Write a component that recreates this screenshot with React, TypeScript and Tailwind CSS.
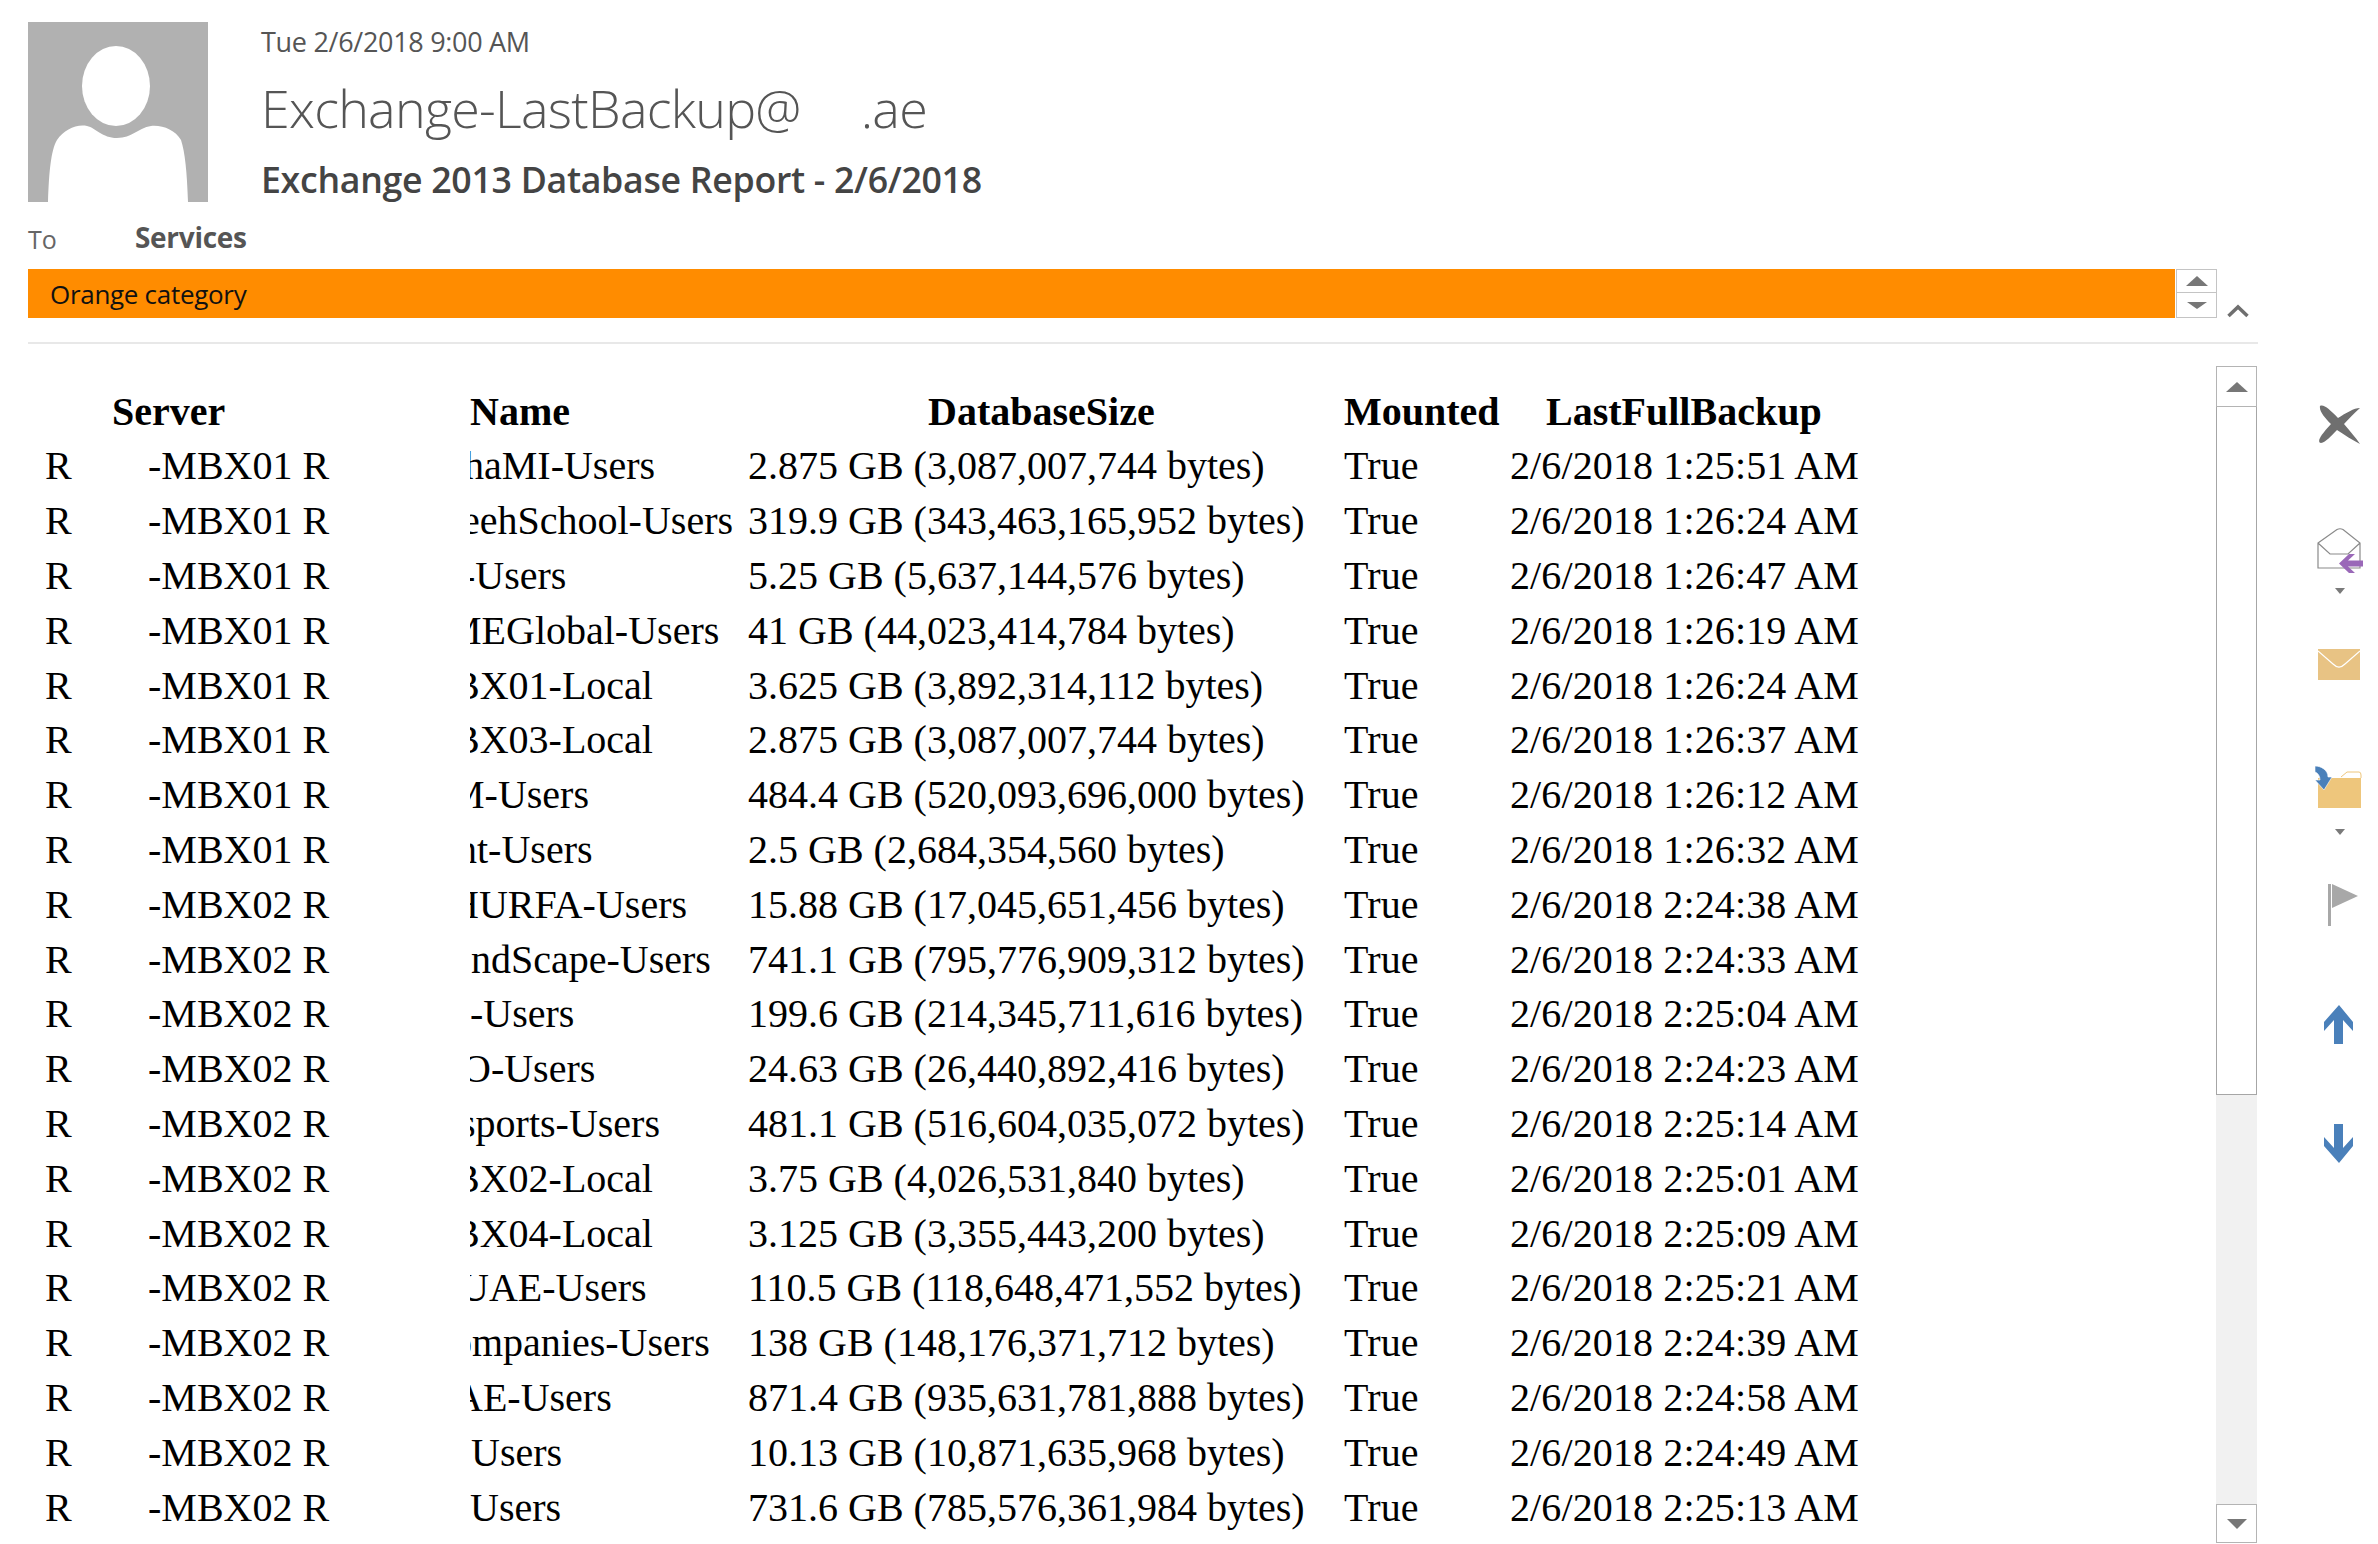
const rows: [string, string, string, string, string][] = [
  ["-MBX01 R", "haMI-Users", "ml-[-6px]", "2.875 GB (3,087,007,744 bytes)", "2/6/2018 1:25:51 AM"],
  ["-MBX01 R", "eehSchool-Users", "ml-[-8px]", "319.9 GB (343,463,165,952 bytes)", "2/6/2018 1:26:24 AM"],
  ["-MBX01 R", "-Users", "ml-[-8px]", "5.25 GB (5,637,144,576 bytes)", "2/6/2018 1:26:47 AM"],
  ["-MBX01 R", "MEGlobal-Users", "ml-[-24px]", "41 GB (44,023,414,784 bytes)", "2/6/2018 1:26:19 AM"],
  ["-MBX01 R", "BX01-Local", "ml-[-17px]", "3.625 GB (3,892,314,112 bytes)", "2/6/2018 1:26:24 AM"],
  ["-MBX01 R", "BX03-Local", "ml-[-17px]", "2.875 GB (3,087,007,744 bytes)", "2/6/2018 1:26:37 AM"],
  ["-MBX01 R", "M-Users", "ml-[-21px]", "484.4 GB (520,093,696,000 bytes)", "2/6/2018 1:26:12 AM"],
  ["-MBX01 R", "nt-Users", "ml-[-13px]", "2.5 GB (2,684,354,560 bytes)", "2/6/2018 1:26:32 AM"],
  ["-MBX02 R", "HURFA-Users", "ml-[-20px]", "15.88 GB (17,045,651,456 bytes)", "2/6/2018 2:24:38 AM"],
  ["-MBX02 R", "ndScape-Users", "ml-[1px]", "741.1 GB (795,776,909,312 bytes)", "2/6/2018 2:24:33 AM"],
  ["-MBX02 R", "-Users", "ml-0", "199.6 GB (214,345,711,616 bytes)", "2/6/2018 2:25:04 AM"],
  ["-MBX02 R", "O-Users", "ml-[-8px]", "24.63 GB (26,440,892,416 bytes)", "2/6/2018 2:24:23 AM"],
  ["-MBX02 R", "sports-Users", "ml-[-10px]", "481.1 GB (516,604,035,072 bytes)", "2/6/2018 2:25:14 AM"],
  ["-MBX02 R", "BX02-Local", "ml-[-17px]", "3.75 GB (4,026,531,840 bytes)", "2/6/2018 2:25:01 AM"],
  ["-MBX02 R", "BX04-Local", "ml-[-17px]", "3.125 GB (3,355,443,200 bytes)", "2/6/2018 2:25:09 AM"],
  ["-MBX02 R", "UAE-Users", "ml-[-10px]", "110.5 GB (118,648,471,552 bytes)", "2/6/2018 2:25:21 AM"],
  ["-MBX02 R", "ompanies-Users", "ml-[-18px]", "138 GB (148,176,371,712 bytes)", "2/6/2018 2:24:39 AM"],
  ["-MBX02 R", "AE-Users", "ml-[-16px]", "871.4 GB (935,631,781,888 bytes)", "2/6/2018 2:24:58 AM"],
  ["-MBX02 R", "Users", "ml-[1px]", "10.13 GB (10,871,635,968 bytes)", "2/6/2018 2:24:49 AM"],
  ["-MBX02 R", "Users", "ml-0", "731.6 GB (785,576,361,984 bytes)", "2/6/2018 2:25:13 AM"],
];

function Caret() {
  return (
    <svg width="10" height="6" viewBox="0 0 10 6" className="block">
      <path d="M0 0H10L5 6Z" fill="#7a7a7a" />
    </svg>
  );
}

function Tri({ up, w = 22, h = 10 }: { up?: boolean; w?: number; h?: number }) {
  return (
    <svg width={w} height={h} viewBox="0 0 22 10" preserveAspectRatio="none" className="block">
      <path d={up ? "M0 10H22L11 0Z" : "M0 0H22L11 10Z"} fill="#777777" />
    </svg>
  );
}

export default function App() {
  return (
    <div className="w-[2378px] h-[1544px] overflow-hidden bg-white flex font-['Open_Sans','Noto_Sans',sans-serif]">
      <div className="w-[2230px] ml-[28px] shrink-0 flex flex-col">
        <div className="flex h-[202px] pt-[22px]">
          <div className="w-[180px] h-[180px] bg-[#b1b1b1] shrink-0">
            <svg width="180" height="180" viewBox="0 0 180 180" className="block">
              <ellipse cx="88" cy="64" rx="34" ry="40" fill="#fff" />
              <path d="M20 180C21 150 23 128 29 118C36 108 48 102 59 104C68 106 74 116 89 116C104 116 110 106 123 104C135 103 147 108 153 118C157 130 159 150 160 180Z" fill="#fff" />
            </svg>
          </div>
          <div className="ml-[53px] flex flex-col text-[#444444]">
            <div className="text-[27px] leading-[36px] mt-[2px] font-normal tracking-[-0.3px] text-[#555555]">Tue 2/6/2018 9:00 AM</div>
            <div className="text-[52px] leading-[70px] mt-[13px] font-light tracking-[-0.72px] text-[#555555] whitespace-pre">Exchange-LastBackup@     <span className="ml-[-4px]">.ae</span></div>
            <div className="text-[35.7px] leading-[48px] mt-[12px] font-semibold tracking-[-0.3px] text-[#444444]">Exchange 2013 Database Report - 2/6/2018</div>
          </div>
        </div>
        <div className="flex h-[67px] items-start pt-[17px]">
          <div className="w-[107px] text-[25px] leading-[34px] mt-[3px] text-[#666666]">To</div>
          <div className="text-[28px] leading-[36px] font-bold tracking-[-0.3px] text-[#555555]">Services</div>
        </div>
        <div className="flex h-[49px]">
          <div className="w-[2147px] h-[49px] bg-[#ff8c00] flex items-center pl-[22px] pt-[2px] text-[26px] tracking-[-0.3px] text-[#111111]">Orange category</div>
          <div className="ml-[1px] w-[41px] h-[49px] border border-[#c4c4c4] flex flex-col">
            <div className="h-[23px] border-b border-[#c4c4c4] flex items-center justify-center"><Tri up /></div>
            <div className="flex-1 flex items-center justify-center"><Tri w={20} h={7} /></div>
          </div>
          <svg width="22" height="14" viewBox="0 0 22 14" className="block ml-[10px] mt-[35px]">
            <path d="M1.5 12L11 3L20.5 12" fill="none" stroke="#6f6f6f" strokeWidth="3.5" />
          </svg>
        </div>
        <div className="h-[2px] mt-[24px] bg-[#e8e8e8]" />
        <div className="flex-1 flex min-h-0 mt-[22px]">
          <div className="flex-1 min-w-0 pt-[19px] font-['Liberation_Serif',serif] text-[40px] text-black whitespace-nowrap">
            <div className="flex h-[54px] items-center font-bold">
              <div className="w-[442px] pl-[84px]">Server</div>
              <div className="w-[278px]">Name</div>
              <div className="w-[596px] pl-[180px]">DatabaseSize</div>
              <div className="w-[166px]">Mounted</div>
              <div className="pl-[36px]">LastFullBackup</div>
            </div>
            {rows.map((r, i) => (
              <div key={i} className="flex h-[54.8px] items-center">
                <div className="w-[120px] pl-[17px]">R</div>
                <div className="w-[322px]">{r[0]}</div>
                <div className="w-[278px] overflow-hidden"><div className={r[2]}>{r[1]}</div></div>
                <div className="w-[596px]">{r[3]}</div>
                <div className="w-[166px] tracking-[0.15px]">True</div>
                <div className="tracking-[0.12px]">{r[4]}</div>
              </div>
            ))}
          </div>
          <div className="w-[41px] mr-[1px] shrink-0 h-[1177px] bg-[#f1f1f1] flex flex-col">
            <div className="h-[41px] border border-[#b4b4b4] bg-white flex items-center justify-center"><Tri up /></div>
            <div className="h-[688px] border border-t-0 border-[#a6a6a6] bg-white" />
            <div className="flex-1" />
            <div className="h-[39px] border border-[#b4b4b4] bg-white flex items-start justify-center pt-[14px]"><Tri w={20} h={10} /></div>
          </div>
        </div>
      </div>
      <div className="flex-1 flex flex-col items-start pl-[60px]">
        <svg width="44" height="40" viewBox="0 0 44 40" className="block mt-[404px]">
          <path d="M2 2C6 0 12 6 20 14C28 9 36 4 42 4C36 9 31 15 26 20C32 27 38 34 42 40C34 36 27 31 19 26C13 32 8 38 3 39C-1 38 1 33 13 20C7 14 1 7 2 2Z" fill="#6f6f6f" />
        </svg>
        <svg width="48" height="46" viewBox="0 0 48 46" className="block mt-[84px] ml-[-1px]">
          <path d="M1 15L20 1.5C22 0.5 24 0.5 26 1.5L43 15V40H1ZM1 15L13 26H31L43 15" fill="none" stroke="#8a8a8a" strokeWidth="1.2" />
          <path d="M22 35.5L32 26H38L31 32.5H46V38.5H31L38 45H32Z" fill="#9a68b8" />
        </svg>
        <div className="ml-[17px] mt-[14px]"><Caret /></div>
        <svg width="42" height="31" viewBox="0 0 42 31" className="block mt-[55px]">
          <rect width="42" height="31" fill="#e8c384" />
          <path d="M0 2L15 15C19 19 23 19 27 15L42 2" fill="none" stroke="#fff" strokeWidth="1.2" />
        </svg>
        <svg width="48" height="44" viewBox="0 0 48 44" className="block mt-[85px] ml-[-3px]">
          <path d="M3 13H46V43H3Z" fill="#eec67c" />
          <path d="M26 12L32 7H44Q46 7 46 10V13" fill="none" stroke="#eec67c" strokeWidth="1" />
          <path d="M0 1C6 1 13 5 13 12L17 12L9 25L0 15H5C5 11 3 8 0 7Z" fill="#4a80ba" stroke="#fff" strokeWidth="0.6" />
        </svg>
        <div className="ml-[17px] mt-[20px]"><Caret /></div>
        <svg width="30" height="42" viewBox="0 0 30 42" className="block mt-[49px] ml-[10px]">
          <rect width="3" height="42" fill="#a8a8a8" />
          <path d="M4 0L30 12L4 24Z" fill="#a8a8a8" />
        </svg>
        <svg width="30" height="39" viewBox="0 0 30 39" className="block mt-[79px] ml-[6px]">
          <path d="M15 0L29 17V26L19 15V39H10V15L0 26V17Z" fill="#4a80ba" />
        </svg>
        <svg width="30" height="39" viewBox="0 0 30 39" className="block mt-[80px] ml-[6px]">
          <path d="M15 39L29 22V13L19 24V0H10V24L0 13V22Z" fill="#4a80ba" />
        </svg>
      </div>
    </div>
  );
}
